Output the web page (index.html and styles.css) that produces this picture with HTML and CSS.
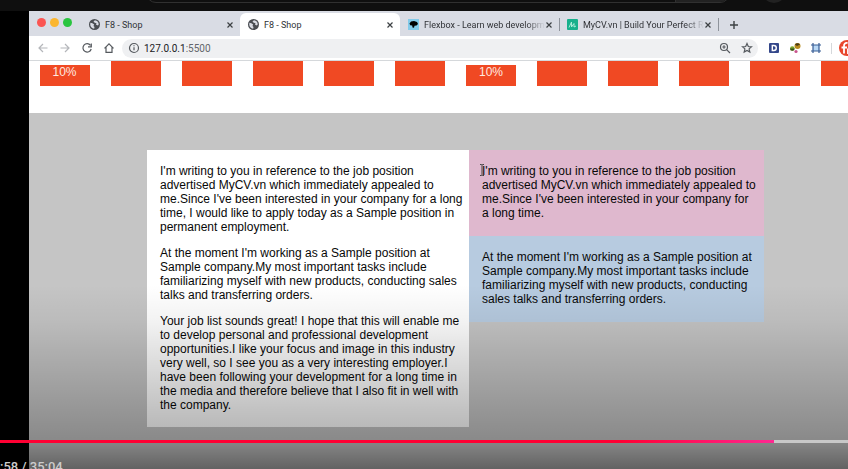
FILE: index.html
```html
<!DOCTYPE html>
<html lang="en">
<head>
<meta charset="utf-8">
<title>F8 - Shop</title>
<link rel="stylesheet" href="styles.css">
</head>
<body>
<svg class="symbols" aria-hidden="true">
  <symbol id="globe" viewBox="0 0 16 16">
    <circle cx="8" cy="8" r="8" fill="#4a4d52"/>
    <path d="M2 5.500 5 6l2.500 2-1 2 1.500 1.500-.500 2.500C4 13.500 1.800 11 1.800 8zM8.500 1.800l-2 2.200 2 1.500 2.500.500-1 2 3 1.500 1.200-2C14 4.500 12 2.300 8.500 1.800z" fill="#d9dce4"/>
  </symbol>
  <symbol id="close" viewBox="0 0 8 8"><path d="M1.500 1.500l5 5m0-5l-5 5" stroke="#3c4043" stroke-width="1.200" fill="none"/></symbol>
</svg>
<header class="site-bar"><span class="search"><span class="search-btn"></span></span><span class="mic"></span></header>
<main class="player">
  <div class="browser">
    <div class="tabs">
      <div class="lights"><i class="red"></i><i class="amber"></i><i class="green"></i></div>
      <div class="tab"><svg class="fav"><use href="#globe"/></svg><span class="name">F8 - Shop</span><button class="close" aria-label="Close tab"><svg><use href="#close"/></svg></button></div>
      <div class="tab active"><svg class="fav"><use href="#globe"/></svg><span class="name">F8 - Shop</span><button class="close" aria-label="Close tab"><svg><use href="#close"/></svg></button></div>
      <div class="tab"><svg class="fav" viewBox="0 0 11 11"><path fill="#83cbea" d="M0 0h11v11H0z"/><path d="M1.500 4.500 3 2.500l3-.500 3 1 1 2-1.500 1.500-2 .3-.500 2-1.500-.3-.3-2-2-.3z"/></svg><span class="name fade">Flexbox - Learn web developm</span><button class="close" aria-label="Close tab"><svg><use href="#close"/></svg></button></div>
      <div class="tab ruled"><svg class="fav" viewBox="0 0 11 11"><rect width="11" height="11" rx="1" fill="#16b08c"/><path d="M2 8.500 4.500 3v5L7 4.500V8l2-1" fill="none" stroke="#b6f0df" stroke-width=".9"/></svg><span class="name fade">MyCV.vn | Build Your Perfect R</span><button class="close" aria-label="Close tab"><svg><use href="#close"/></svg></button></div>
      <button class="new-tab" aria-label="New tab"><svg viewBox="0 0 10 10"><path d="M5 1v8M1 5h8" stroke="#3c4043" stroke-width="1.400"/></svg></button>
    </div>
    <div class="toolbar">
      <button aria-label="Back"><svg class="dim" viewBox="0 0 12 12"><path d="M10.500 6H2m4-4L2 6l4 4"/></svg></button>
      <button aria-label="Forward"><svg class="dim" viewBox="0 0 12 12"><path d="M1.500 6H10M6 2l4 4-4 4"/></svg></button>
      <button aria-label="Reload"><svg viewBox="0 0 12 12"><path d="M9.500 3.300A4.200 4.200 0 1 0 10.200 7M10.300 1.500v3.300H7"/></svg></button>
      <button aria-label="Home"><svg viewBox="0 0 12 12"><path d="M1.500 6.300 6 1.800l4.500 4.500M3 5.300v5h6v-5"/></svg></button>
      <div class="address">
        <svg viewBox="0 0 12 12"><circle cx="6" cy="6" r="4.500"/><path d="M6 5.300v3M6 3.300v1"/></svg>
        <span class="url">127.0.0.1<span>:5500</span></span>
        <svg viewBox="0 0 12 12"><circle cx="5" cy="5" r="3.500"/><path d="M7.600 7.600 11 11M3.300 5h3.400M5 3.300v3.400"/></svg>
        <svg viewBox="0 0 12 12"><path d="m6 1.500 1.300 3 3.200.3-2.400 2.100.7 3.200L6 8.400l-2.800 1.700.7-3.200L1.500 4.800l3.200-.3z"/></svg>
      </div>
      <div class="extensions">
        <svg viewBox="0 0 12 12"><rect x="1" y="1" width="10" height="10" rx="1" fill="#34478a" stroke="none"/><path d="M4.300 3.500h1.500a2.500 2.500 0 0 1 0 5H4.300z" stroke="#fff" stroke-width="1.400"/></svg>
        <svg viewBox="0 0 12 12" class="solid"><circle cx="8.500" cy="4" r="3" fill="#b98b1d"/><path d="M6 2.500A3 3 0 0 1 11 2.500L8 4z" fill="#4a3b18"/><circle cx="3.300" cy="6.500" r="2.300" fill="#79a52a"/><path d="M1 6.500a2.300 2.300 0 0 0 4.600 0z" fill="#37501a"/><circle cx="7" cy="9.500" r="1.600" fill="#c9558e"/></svg>
        <svg viewBox="0 0 12 12"><path d="M3 3h6v6H3z" fill="#b9d8f5" stroke="none"/><path d="M1 3h10M1 9h10M3 1v10M9 1v10" stroke="#375c94"/></svg>
        <span class="divider"></span>
        <svg class="avatar" viewBox="0 0 16 16"><circle cx="8" cy="8" r="8" fill="#e8452c" stroke="none"/><path d="M8.500 3C6 2.500 5 4 5 6v7.500M2.500 7.500H8M9 14V9.500h4" stroke="#fff" stroke-width="1.800"/></svg>
      </div>
    </div>
    <div class="page">
      <div class="columns">
        <div><b class="offset">10%</b></div><div><b></b></div><div><b></b></div><div><b></b></div><div><b></b></div><div><b></b></div>
        <div><b class="offset">10%</b></div><div><b></b></div><div><b></b></div><div><b></b></div><div><b></b></div><div><b></b></div>
      </div>
      <div class="stage">
        <div class="letters">
          <article class="card white">
            <p>I'm writing to you in reference to the job position<br>advertised MyCV.vn which immediately appealed to<br>me.Since I've been interested in your company for a long<br>time, I would like to apply today as a Sample position in<br>permanent employment.</p>
            <p>At the moment I'm working as a Sample position at<br>Sample company.My most important tasks include<br>familiarizing myself with new products, conducting sales<br>talks and transferring orders.</p>
            <p>Your job list sounds great! I hope that this will enable me<br>to develop personal and professional development<br>opportunities.I like your focus and image in this industry<br>very well, so I see you as a very interesting employer.I<br>have been following your development for a long time in<br>the media and therefore believe that I also fit in well with<br>the company.</p>
          </article>
          <div class="side">
            <article class="card pink">
              <p>I'm writing to you in reference to the job position<br>advertised MyCV.vn which immediately appealed to<br>me.Since I've been interested in your company for<br>a long time.</p>
              <svg class="cursor" viewBox="0 0 6 12"><path d="M1 .500h1.500L3 1l.500-.500H5M3 1v10M1 11.500h1.500L3 11l.500.500H5" fill="none" stroke="#444"/></svg>
            </article>
            <article class="card blue">
              <p>At the moment I'm working as a Sample position at<br>Sample company.My most important tasks include<br>familiarizing myself with new products, conducting<br>sales talks and transferring orders.</p>
            </article>
          </div>
        </div>
      </div>
    </div>
  </div>
  <div class="controls">
    <div class="progress"><div class="played"></div></div>
    <div class="time">:58 / 35:04</div>
  </div>
</main>
</body>
</html>
```

FILE: styles.css
```css
* { box-sizing: border-box; }
body {
  margin: 0;
  height: 100vh;
  overflow: hidden;
  display: flex;
  flex-direction: column;
  background: #000;
  font-family: "Liberation Sans", Arial, sans-serif;
}
button { border: 0; padding: 0; background: none; display: flex; }
svg { display: block; flex: none; }
.symbols { position: absolute; width: 0; height: 0; }

.site-bar {
  flex: none;
  display: flex;
  align-items: flex-end;
  gap: 32px;
  height: 11px;
  padding-left: 146px;
  padding-bottom: 8px;
  background: #0f0f0f;
}
.search {
  display: flex;
  justify-content: flex-end;
  width: 584px;
  height: 20px;
  border: 1px solid #303030;
  border-radius: 10px;
  overflow: hidden;
}
.search-btn { width: 54px; background: #222; border-left: 1px solid #303030; }
.mic { width: 24px; height: 24px; border-radius: 50%; background: #222; }

.player { position: relative; flex: 1; min-height: 0; padding-left: 29px; overflow: hidden; }
.browser { height: 100%; display: flex; flex-direction: column; background: #fff; overflow: hidden; }

.tabs {
  flex: none;
  display: flex;
  align-items: flex-end;
  height: 25px;
  background: #d9dce4;
  font: 400 9px/12px Roboto, sans-serif;
  color: #303236;
}
.lights { display: flex; gap: 4px; width: 52px; height: 18px; padding-left: 8px; }
.lights i { width: 9px; height: 9px; border-radius: 50%; }
.red { background: #fb5552; }
.amber { background: #fbb62f; }
.green { background: #29c53f; }
.tab {
  display: flex;
  align-items: center;
  gap: 5px;
  width: 159px;
  height: 23px;
  padding: 0 6px 0 8px;
}
.tab.active { width: 160px; background: #fff; border-radius: 6px 6px 0 0; }
.fav { width: 11px; height: 11px; }
.name { flex: 1; min-width: 0; padding-top: 1px; overflow: hidden; white-space: nowrap; }
.fade { margin-right: -5px; mask-image: linear-gradient(to right, #000 85%, transparent); }
.close svg { width: 8px; height: 8px; }
.ruled { background: linear-gradient(#8e939b, #8e939b) left center / 1px 13px no-repeat; }
.new-tab { height: 23px; align-items: center; gap: 10px; }
.new-tab svg { width: 10px; height: 10px; }
.new-tab::before { content: ""; width: 1px; height: 13px; background: #8e939b; }

.toolbar {
  flex: none;
  display: flex;
  align-items: center;
  gap: 10px;
  height: 25px;
  padding-left: 8px;
  border-bottom: 1px solid #d5d8db;
}
.toolbar svg { width: 12px; height: 12px; fill: none; stroke: #55595e; stroke-width: 1.2; }
.toolbar svg.dim { stroke: #b4b6ba; }
.address {
  flex: 1;
  display: flex;
  align-items: center;
  gap: 10px;
  height: 19px;
  padding: 0 5px 0 6px;
  margin-left: -3px;
  border-radius: 10px;
  background: #eff0f2;
  font: 400 10px/14px Roboto, sans-serif;
  color: #202124;
}
.url { flex: 1; margin-left: -6px; padding-top: 1px; }
.url span { color: #63666b; }
.extensions { flex: none; display: flex; align-items: center; gap: 9px; width: 80px; overflow: hidden; }
.toolbar .solid { stroke: none; }
.divider { flex: none; width: 1px; height: 11px; margin-right: -2px; background: #d5d8db; }
.toolbar .avatar { width: 16px; height: 16px; }

.page { flex: 1; min-height: 0; margin-right: -34px; display: flex; flex-direction: column; }
.columns { flex: none; display: flex; height: 52px; }
.columns div { flex: 1; display: flex; justify-content: center; }
.columns b {
  width: 50px;
  height: 25px;
  background: #f04923;
  color: #ffe9e0;
  font-size: 12px;
  font-weight: 400;
  line-height: 14px;
  text-align: center;
}
.columns .offset { margin-top: 4px; height: 21px; }
.stage { flex: 1; padding-top: 37px; background: #c5c5c5; }
.letters { display: flex; align-items: flex-start; justify-content: center; }
.card {
  display: flow-root;
  position: relative;
  padding: 2px 0 4px 13px;
  font-size: 12px;
  line-height: 14px;
  white-space: nowrap;
  color: #080808;
}
.card p { margin: 12px 0; }
.white { width: 322px; padding-bottom: 3px; background: #fff; }
.side { width: 295px; }
.pink { background: #dfb8ce; }
.blue { background: #b7cbe0; }
.cursor { position: absolute; left: 10px; top: 14px; width: 6px; height: 12px; }

.controls {
  position: absolute;
  inset: auto 0 0 0;
  height: 184px;
  padding-top: 155px;
  background: linear-gradient(to bottom, transparent, rgba(0, 0, 0, .05) 20%, rgba(0, 0, 0, .3) 84%, rgba(0, 0, 0, .5));
}
.progress { height: 3px; background: #c8c8c8; }
.played { width: 91.3%; height: 3px; background: linear-gradient(to right, #ff0033 80%, #ff2791); }
.time {
  padding-top: 16px;
  font: 500 13px/16px Roboto, sans-serif;
  color: #ccc;
  white-space: nowrap;
}
```
